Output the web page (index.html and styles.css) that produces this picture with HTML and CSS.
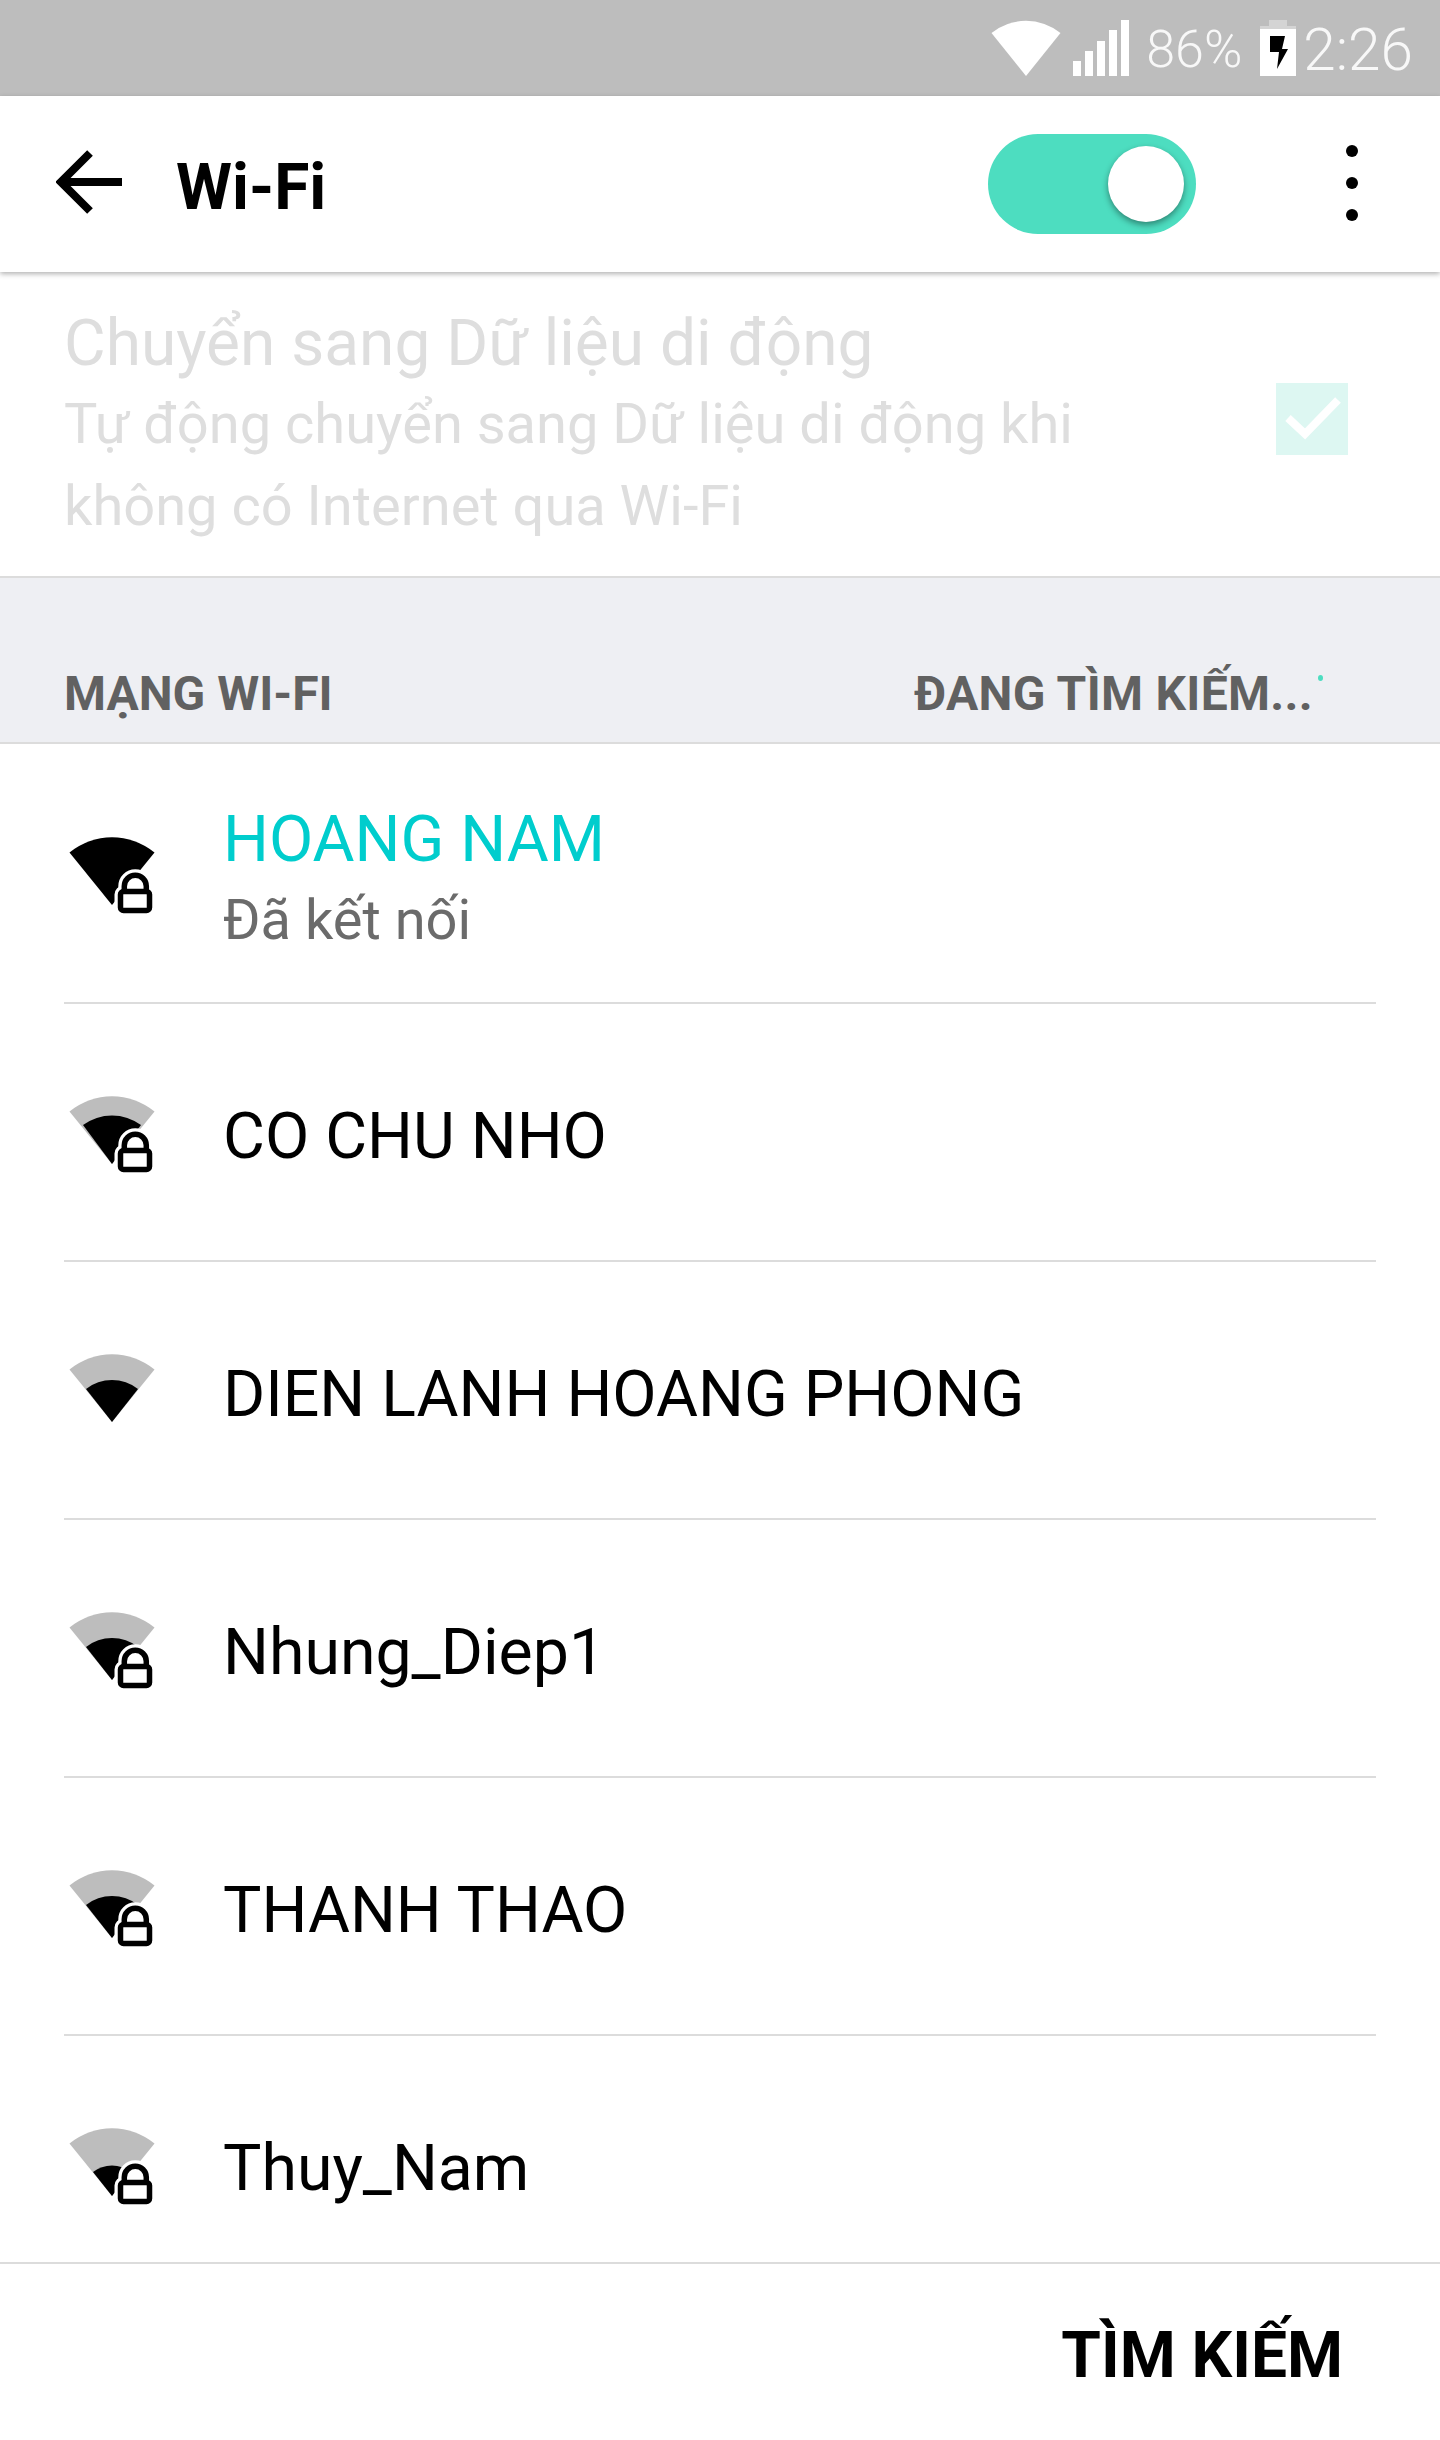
FILE: index.html
```html
<!DOCTYPE html>
<html>

<head>
    <meta charset="utf-8">
    <title>Wi-Fi</title>
    <link rel="stylesheet" href="styles.css">
</head>

<body>
    <svg class="defs" width="0" height="0">
        <defs>
            <path id="sector" d="M0.5 15.5A67 67 0 0 1 85.5 15.5L43 68Z"/>
            <g id="lock">
                <rect class="lock-halo" x="51.5" y="54.5" width="29" height="19" rx="3"/>
                <path class="lock-halo" d="M55.3 54V49.3A11 11 0 0 1 77.3 49.3V54"/>
                <rect class="lock-body" x="51.5" y="54.5" width="29" height="19" rx="3"/>
                <path class="lock-hoop" d="M55.3 54V49.3A11 11 0 0 1 77.3 49.3V54"/>
            </g>
        </defs>
    </svg>

    <div class="status-bar">
        <svg class="st-wifi" width="70" height="56" viewBox="0 0 70 56">
            <path d="M0.5 13A55 55 0 0 1 69.5 13L35 56Z"/>
        </svg>
        <div class="st-signal">
            <i class="h1"></i><i class="h2"></i><i class="h3"></i><i class="h4"></i><i class="h5"></i>
        </div>
        <span class="st-pct">86%</span>
        <svg class="st-batt" width="36" height="56" viewBox="0 0 36 56">
            <path class="batt-used" d="M9 0H27V6H36V9H0V6H9Z"/>
            <rect class="batt-fill" y="9" width="36" height="47"/>
            <path class="batt-bolt" d="M10 16H25L22 29H28L17 49L19 32H10Z"/>
        </svg>
        <span class="st-time">2:26</span>
    </div>

    <header class="app-bar">
        <svg class="back" width="66" height="64" viewBox="0 0 66 64">
            <path d="M66 32H4M34 3L5 32L34 61"/>
        </svg>
        <h1 class="title">Wi-Fi</h1>
        <div class="toggle"><div class="knob"></div></div>
        <div class="more"><i></i><i></i><i></i></div>
    </header>

    <section class="option">
        <div class="option-text">
            <div class="option-title">Chuyển sang Dữ liệu di động</div>
            <div class="option-desc">Tự động chuyển sang Dữ liệu di động khi<br>không có Internet qua Wi-Fi</div>
        </div>
        <div class="check">
            <svg width="72" height="72" viewBox="0 0 72 72">
                <path d="M12 35L29 51L62 17"/>
            </svg>
        </div>
    </section>

    <div class="section-head">
        <span>MẠNG WI-FI</span>
        <span class="scanning">ĐANG TÌM KIẾM...<i class="scan-dot"></i></span>
    </div>

    <main class="list">
        <div class="row row-first">
            <svg class="signal" width="90" height="80" viewBox="0 0 90 80">
                <use href="#sector" class="full"/>
                <use href="#lock"/>
            </svg>
            <div class="two-line">
                <div class="name name-on">HOANG NAM</div>
                <div class="sub">Đã kết nối</div>
            </div>
        </div>
        <div class="row">
            <svg class="signal" width="90" height="80" viewBox="0 0 90 80">
                <use href="#sector" class="weak"/>
                <path d="M14 29A49 49 0 0 1 72 29L43 68Z"/>
                <use href="#lock"/>
            </svg>
            <div class="name">CO CHU NHO</div>
        </div>
        <div class="row">
            <svg class="signal" width="90" height="80" viewBox="0 0 90 80">
                <use href="#sector" class="weak"/>
                <path d="M17 35A42 42 0 0 1 69 35L43 68Z"/>
            </svg>
            <div class="name">DIEN LANH HOANG PHONG</div>
        </div>
        <div class="row">
            <svg class="signal" width="90" height="80" viewBox="0 0 90 80">
                <use href="#sector" class="weak"/>
                <path d="M17 35A42 42 0 0 1 69 35L43 68Z"/>
                <use href="#lock"/>
            </svg>
            <div class="name">Nhung_Diep1</div>
        </div>
        <div class="row">
            <svg class="signal" width="90" height="80" viewBox="0 0 90 80">
                <use href="#sector" class="weak"/>
                <path d="M17 35A42 42 0 0 1 69 35L43 68Z"/>
                <use href="#lock"/>
            </svg>
            <div class="name">THANH THAO</div>
        </div>
        <div class="row">
            <svg class="signal" width="90" height="80" viewBox="0 0 90 80">
                <use href="#sector" class="weak"/>
                <path d="M24 44A31 31 0 0 1 62 44L43 68Z"/>
                <use href="#lock"/>
            </svg>
            <div class="name">Thuy_Nam</div>
        </div>
    </main>

    <footer class="footer">
        <span class="scan-btn">TÌM KIẾM</span>
    </footer>
</body>

</html>
```

FILE: styles.css
```css
html,
body {
    margin: 0;
    padding: 0;
    background: #fff;
}

body {
    width: 1440px;
    height: 2440px;
    overflow: hidden;
    font-family: Roboto, "Noto Sans", sans-serif;
    color: #000;
}

.defs {
    display: block;
    height: 0;
}

.status-bar {
    height: 96px;
    background: #bdbdbd;
    color: #f8f8f8;
    display: flex;
    align-items: flex-start;
    padding: 20px 27px 0 0;
    box-sizing: border-box;
    justify-content: flex-end;
    font-weight: 300;
}

.st-wifi {
    fill: #fff;
    margin-right: 12px;
}

.st-signal {
    height: 56px;
    display: flex;
    align-items: flex-end;
    gap: 4px;
    margin-right: 17px;
}

.st-signal i {
    display: block;
    width: 8px;
    background: #fff;
}

.h1 { height: 15px; }
.h2 { height: 25px; }
.h3 { height: 35px; }
.h4 { height: 46px; }
.h5 { height: 56px; }

.st-pct {
    font-size: 52px;
    line-height: 56px;
    margin-top: 2px;
    margin-right: 18px;
}

.batt-used { fill: #d4d4d4; }
.batt-fill { fill: #fff; }
.batt-bolt { fill: #000; }

.st-batt {
    margin-right: 7px;
}

.st-time {
    font-size: 58.5px;
    line-height: 56px;
    margin-top: 2px;
}

.app-bar {
    height: 176px;
    display: flex;
    align-items: center;
    position: relative;
    box-shadow: 0 2px 5px rgba(0, 0, 0, 0.3);
    background: #fff;
}

.back {
    margin: -4px 0 0 56px;
    fill: none;
    stroke: #000;
    stroke-width: 8;
}

.title {
    margin: 6px 0 0 54px;
    font-size: 64px;
    font-weight: 700;
    flex: 1;
}

.toggle {
    width: 208px;
    height: 100px;
    border-radius: 50px;
    background: #4dddc0;
    position: relative;
}

.knob {
    position: absolute;
    right: 12px;
    top: 12px;
    width: 76px;
    height: 76px;
    border-radius: 50%;
    background: #fff;
    box-shadow: 0 3px 6px rgba(0, 0, 0, 0.4);
}

.more {
    width: 12px;
    margin: -2px 82px 0 150px;
    display: flex;
    flex-direction: column;
    gap: 20px;
}

.more i {
    display: block;
    width: 12px;
    height: 12px;
    border-radius: 50%;
    background: #000;
}

.option {
    height: 304px;
    display: flex;
    align-items: center;
    justify-content: space-between;
    padding: 0 92px 0 64px;
    border-bottom: 2px solid #dcdcdc;
    color: #dedede;
}

.option-text {
    align-self: flex-start;
    padding-top: 32px;
}

.option-title {
    font-size: 64px;
    line-height: 79px;
}

.option-desc {
    font-size: 56px;
    line-height: 82px;
}

.check {
    width: 72px;
    height: 72px;
    background: #ddf7f2;
    margin-top: -10px;
}

.check svg {
    display: block;
    fill: none;
    stroke: #fff;
    stroke-width: 8;
}

.section-head {
    background: #eeeff3;
    border-bottom: 2px solid #dcdcdc;
    display: flex;
    align-items: flex-end;
    justify-content: space-between;
    padding: 0 127px 20px 64px;
    box-sizing: border-box;
    height: 166px;
    font-size: 48px;
    font-weight: 700;
    color: #616161;
    line-height: 56px;
}

.scanning {
    position: relative;
    letter-spacing: 0.3px;
}

.scan-dot {
    position: absolute;
    left: 404px;
    top: 9px;
    width: 5px;
    height: 6px;
    border-radius: 50%;
    background: #4dddc0;
}

.list {
    height: 1518px;
    overflow: hidden;
}

.row {
    height: 258px;
    margin: 0 64px;
    display: flex;
    align-items: center;
    border-bottom: 2px solid #dcdcdc;
    box-sizing: border-box;
}

.row-first {
    height: 260px;
}

.signal {
    fill: #000;
    margin: 8px 64px 0 5px;
    flex: none;
}

.signal .full { fill: #000; }
.signal .weak { fill: #bdbdbd; }

.lock-halo {
    fill: #fff;
    stroke: #fff;
    stroke-width: 12;
}
.lock-body {
    fill: #fff;
    stroke: #000;
    stroke-width: 5.5;
}
.lock-hoop {
    fill: none;
    stroke: #000;
    stroke-width: 5.5;
}

.name {
    font-size: 64.4px;
    line-height: 76px;
}

.row > .name {
    margin-top: 7px;
}

.two-line {
    margin-top: 7px;
}

.name-on {
    color: #00cdcd;
}

.sub {
    font-size: 56px;
    line-height: 66px;
    margin-top: 10px;
    color: #6b6b6b;
}

.footer {
    border-top: 2px solid #dcdcdc;
    height: 178px;
    box-sizing: border-box;
    display: flex;
    align-items: center;
    justify-content: flex-end;
    padding: 6px 97px 0 0;
}

.scan-btn {
    font-size: 64px;
    font-weight: 700;
}
```
